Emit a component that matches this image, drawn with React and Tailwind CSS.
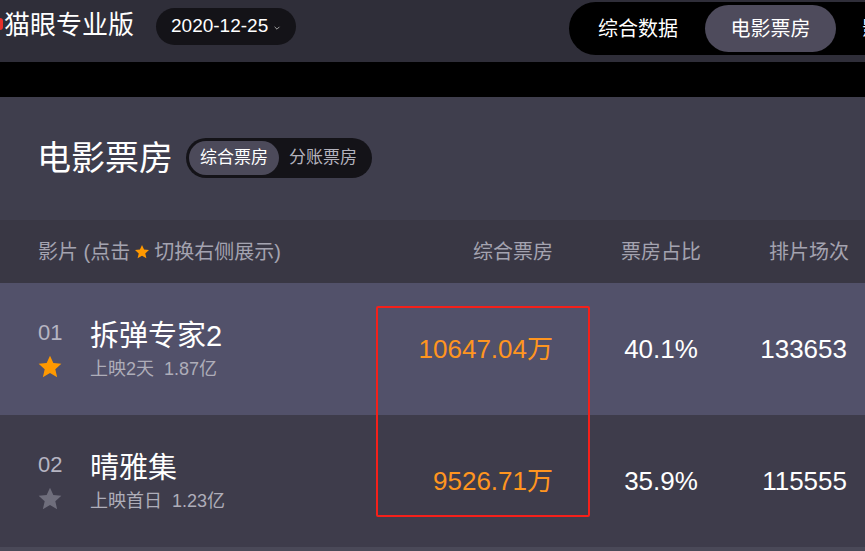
import React from 'react'

const font = { fontFamily: '"Liberation Sans", "Noto Sans CJK SC", sans-serif' }

function Star({ className }) {
  return (
    <svg viewBox="0 0 24 24" className={className}>
      <path
        fill="currentColor"
        d="M12 1.5l3.1 6.9 7.4.7-5.6 5 1.7 7.4L12 17.6l-6.6 3.9 1.7-7.4-5.6-5 7.4-.7z"
      />
    </svg>
  )
}

const rows = [
  { no: '01', title: '拆弹专家2', sub: '上映2天', total: '1.87亿', box: '10647.04万', rate: '40.1%', shows: '133653', fav: true, bg: 'bg-[#52516a]' },
  { no: '02', title: '晴雅集', sub: '上映首日', total: '1.23亿', box: '9526.71万', rate: '35.9%', shows: '115555', fav: false, bg: 'bg-[#3e3c4b]' },
]

export default function App() {
  return (
    <div className="relative w-[865px] h-[551px] overflow-hidden bg-[#3f3e4d] text-white" style={font}>
      {/* Top bar */}
      <div className="h-[62px] bg-[#2f2e39] flex items-start">
        <div className="w-[569px] shrink-0 flex items-start">
          <div className="w-[6px] h-[12px] mt-[18px] -ml-[3px] rounded-full bg-[#e8302a]" />
          <div className="ml-[1px] mt-[8px] text-[26px] leading-[34px] text-white">猫眼专业版</div>
          <div className="ml-[22px] mt-[8px] h-[37px] w-[140px] rounded-full bg-[#141318] flex items-center pl-[15px] text-[19px]">
            2020-12-25
            <svg viewBox="0 0 10 10" className="w-[8px] h-[8px] ml-[5px] mt-[3px] text-[#aaa]">
              <path d="M2 3.5l3 3 3-3" fill="none" stroke="currentColor" strokeWidth="1.2" />
            </svg>
          </div>
        </div>
        <div className="mt-[2px] h-[53px] flex-1 rounded-l-full bg-black flex items-center pl-[29px] text-[20px] whitespace-nowrap overflow-hidden">
          <span className="w-[107px] shrink-0">综合数据</span>
          <span className="h-[47px] w-[131px] shrink-0 rounded-full bg-[#4e4b5c] flex items-center justify-center">电影票房</span>
          <span className="ml-[26px]">影片</span>
        </div>
      </div>
      <div className="h-[35px] bg-black" />

      {/* Title */}
      <div className="h-[123px] flex items-center pl-[37px] pb-[2px]">
        <h1 className="text-[34px] leading-none font-normal">电影票房</h1>
        <div className="ml-[13px] h-[40px] w-[186px] rounded-full bg-[#141318] flex items-center p-[3px] text-[17px]">
          <span className="h-[34px] w-[90px] rounded-full bg-[#4c4a5a] flex items-center justify-center">综合票房</span>
          <span className="flex-1 text-center text-[#b3b2bd] pr-[2px]">分账票房</span>
        </div>
      </div>

      {/* Table header */}
      <div className="h-[63px] bg-[#393744] flex items-center pl-[38px] pr-[16px] text-[20px] text-[#a4a3b0]">
        <div className="flex-1 flex items-center">
          影片 (点击
          <Star className="w-[16px] h-[16px] mx-[4px] text-[#ff9900]" />
          切换右侧展示)
        </div>
        <div className="w-[150px] mr-[2px] text-right">综合票房</div>
        <div className="w-[122px] ml-[45px] text-center">票房占比</div>
        <div className="w-[127px] text-right">排片场次</div>
      </div>

      {rows.map((r) => (
        <div key={r.no} className={`h-[132px] ${r.bg} flex items-center pl-[38px] pr-[18px]`}>
          <div className="flex-1 flex items-center">
            <div className="w-[52px] flex flex-col mt-[2px]">
              <span className="text-[22px] leading-[24px] text-[#b6b5c2]">{r.no}</span>
              <Star className={`w-[26px] h-[26px] -ml-[1px] mt-[9px] ${r.fav ? 'text-[#ff9900]' : 'text-[#6f6e7c]'}`} />
            </div>
            <div className="flex flex-col">
              <span className="text-[29px] leading-[36px]">{r.title}</span>
              <span className="mt-[4px] text-[18px] leading-[22px] text-[#aeadb9]">
                {r.sub}
                <span className="ml-[10px]">{r.total}</span>
              </span>
            </div>
          </div>
          <div className="w-[150px] text-right text-[26px] text-[#ff951f]">{r.box}</div>
          <div className="w-[122px] ml-[47px] text-center text-[26px]">{r.rate}</div>
          <div className="w-[125px] text-right text-[26px]">{r.shows}</div>
        </div>
      ))}
      <div className="h-[10px] bg-[#4a4958]" />

      {/* Annotation */}
      <div className="absolute left-[376px] top-[306px] w-[214px] h-[211px] border-2 border-[#f5201a] rounded-[2px] pointer-events-none" />
    </div>
  )
}
